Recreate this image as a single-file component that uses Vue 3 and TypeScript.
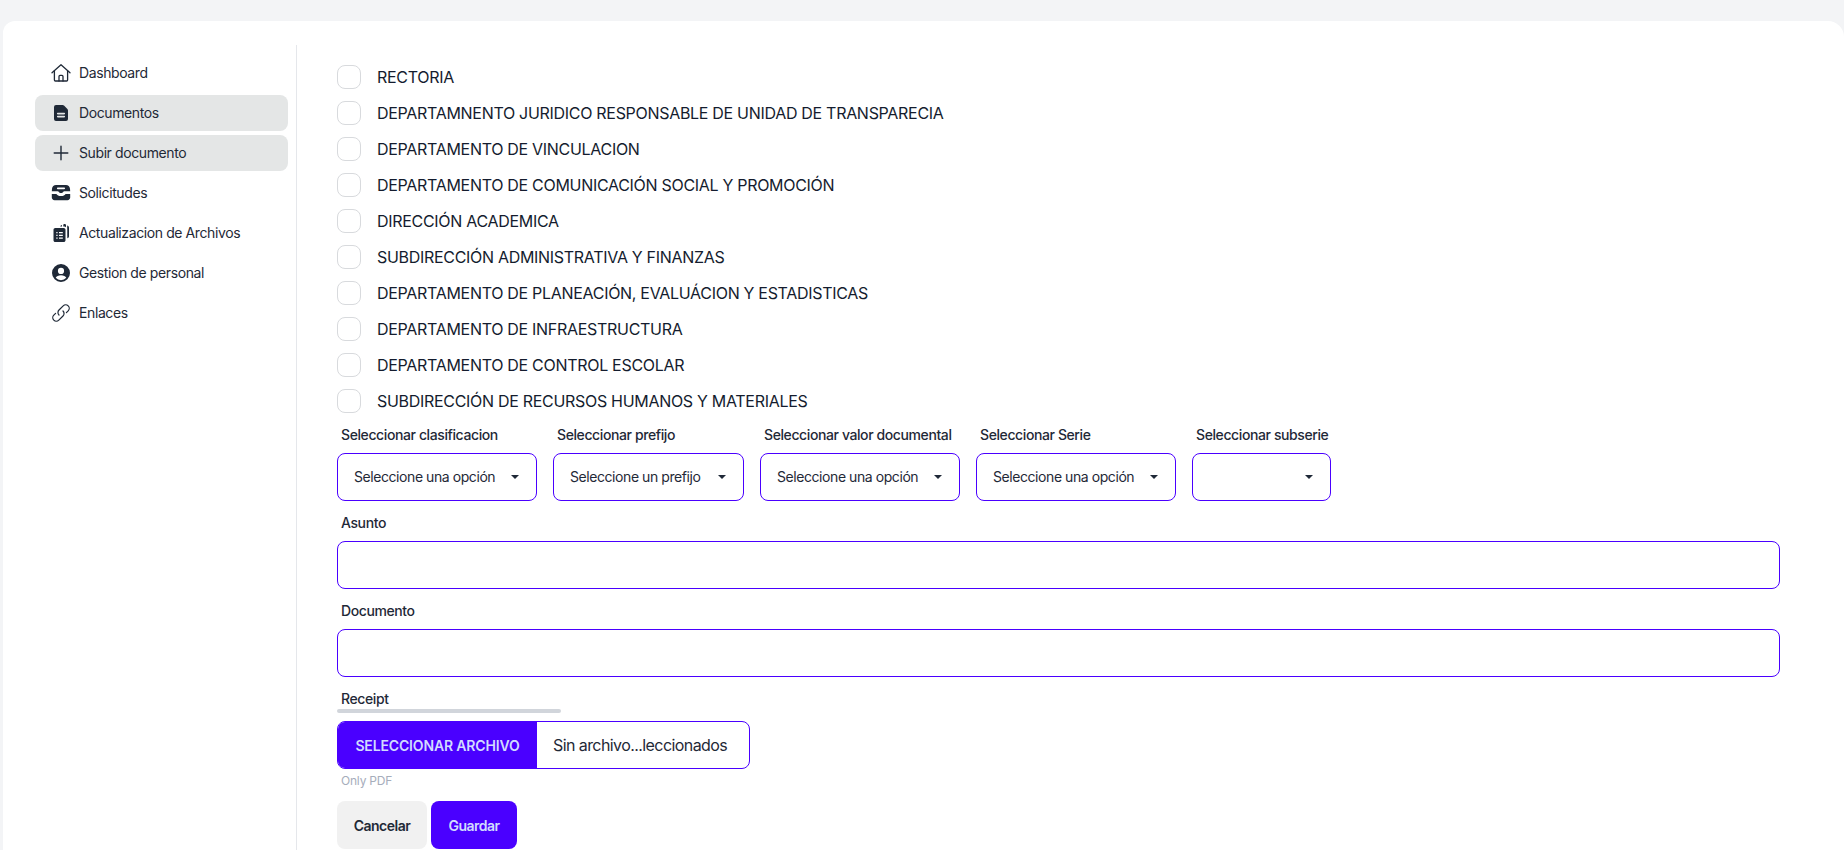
<script setup lang="ts">
import { ref } from 'vue';

interface NavItem {
  label: string;
  icon: string;
  active?: boolean;
}

const navItems: NavItem[] = [
  { label: 'Dashboard', icon: 'home' },
  { label: 'Documentos', icon: 'doc', active: true },
  { label: 'Subir documento', icon: 'plus', active: true },
  { label: 'Solicitudes', icon: 'trays' },
  { label: 'Actualizacion de Archivos', icon: 'files' },
  { label: 'Gestion de personal', icon: 'user' },
  { label: 'Enlaces', icon: 'link' },
];

const areas = [
  'RECTORIA',
  'DEPARTAMNENTO JURIDICO RESPONSABLE DE UNIDAD DE TRANSPARECIA',
  'DEPARTAMENTO DE VINCULACION',
  'DEPARTAMENTO DE COMUNICACIÓN SOCIAL Y PROMOCIÓN',
  'DIRECCIÓN ACADEMICA',
  'SUBDIRECCIÓN ADMINISTRATIVA Y FINANZAS',
  'DEPARTAMENTO DE PLANEACIÓN, EVALUÁCION Y ESTADISTICAS',
  'DEPARTAMENTO DE INFRAESTRUCTURA',
  'DEPARTAMENTO DE CONTROL ESCOLAR',
  'SUBDIRECCIÓN DE RECURSOS HUMANOS Y MATERIALES',
];

const selects = [
  { label: 'Seleccionar clasificacion', placeholder: 'Seleccione una opción' },
  { label: 'Seleccionar prefijo', placeholder: 'Seleccione un prefijo' },
  { label: 'Seleccionar valor documental', placeholder: 'Seleccione una opción' },
  { label: 'Seleccionar Serie', placeholder: 'Seleccione una opción' },
  { label: 'Seleccionar subserie', placeholder: '' },
];

const checked = ref<string[]>([]);
const asunto = ref('');
const documento = ref('');
</script>

<template>
  <div class="page">
    <div class="card">
      <aside class="sidebar">
        <ul class="menu">
          <li v-for="item in navItems" :key="item.label" class="menu-item" :class="{ active: item.active }">
            <svg v-if="item.icon === 'home'" class="icon" viewBox="0 0 20 20" fill="none" stroke="currentColor" stroke-width="1.3" stroke-linecap="round" stroke-linejoin="round">
              <path d="M1 9.800 10 1.800l9 8" />
              <path d="M3.400 8v9a1 1 0 0 0 1 1h11.200a1 1 0 0 0 1-1V8" />
              <path d="M8 18v-4.600a1 1 0 0 1 1-1h2a1 1 0 0 1 1 1V18" />
            </svg>
            <svg v-else-if="item.icon === 'doc'" class="icon" viewBox="0 0 20 20" fill="currentColor">
              <path fill-rule="evenodd" d="M5 2h6.600c.5 0 1 .2 1.400.6l3.400 3.400c.4.400.6.900.6 1.400V16a2 2 0 0 1-2 2H5a2 2 0 0 1-2-2V4a2 2 0 0 1 2-2Zm1.700 7.800a.8.8 0 0 0 0 1.600h6.600a.8.8 0 0 0 0-1.600Zm0 3a.8.8 0 0 0 0 1.600h6.600a.8.8 0 0 0 0-1.600Z" />
            </svg>
            <svg v-else-if="item.icon === 'plus'" class="icon" viewBox="0 0 20 20" fill="none" stroke="currentColor" stroke-width="1.4" stroke-linecap="round">
              <path d="M10 3.200v13.600M3.200 10h13.600" />
            </svg>
            <svg v-else-if="item.icon === 'trays'" class="icon" viewBox="0 0 20 20" fill="currentColor">
              <path fill-rule="evenodd" d="M5 2h10c2.200 0 3.800 1.600 4 3.800l.2 2.400h-6c-.4 0-.7.2-.9.600-.4.800-1.200 1.200-2.300 1.200s-1.900-.4-2.300-1.200c-.2-.4-.5-.6-.9-.6h-6L1 5.800C1.200 3.600 2.800 2 5 2Zm1.800 2.400c-.5 0-.9.4-.9.900s.4.900.9.900h6.400c.5 0 .9-.4.900-.9s-.4-.9-.9-.9Z" />
              <path d="M.8 11h4.600c.6 1.300 2.400 2.100 4.600 2.100s4-.8 4.600-2.100h4.600v3.600c0 1.500-1.200 2.600-2.700 2.600H3.500C2 17.200.8 16.100.8 14.600Z" />
            </svg>
            <svg v-else-if="item.icon === 'files'" class="icon" viewBox="0 0 20 20" fill="currentColor">
              <path d="M9.200 3.400c.2-.8.9-1.400 1.800-1.500v1.500Z" />
              <path d="M12.300 3.400V2c0-.6.600-1 1.300-1 .7 0 1.400.4 1.400 1.200v2c-.4-.5-1-.8-1.700-.8Z" />
              <path d="M16.200 2.400c1 .3 1.800 1.100 1.800 2.200v8.600c0 1-.6 1.800-1.700 2Z" />
              <path fill-rule="evenodd" d="M4.300 5h8.400c1 0 1.800.8 1.800 1.800v10.400c0 1-.8 1.800-1.800 1.800H4.300c-1 0-1.800-.8-1.800-1.800V6.800C2.500 5.800 3.300 5 4.300 5Zm1 4v1.300h1.300V9Zm2.700 0v1.300h3.800V9Zm-2.700 2.700V13h1.300v-1.300Zm2.700 0V13h3.800v-1.300Zm-2.700 2.700v1.300h1.300v-1.300Zm2.700 0v1.300h3.800v-1.300Z" />
            </svg>
            <svg v-else-if="item.icon === 'user'" class="icon" viewBox="0 0 20 20" fill="currentColor">
              <path fill-rule="evenodd" d="M10 1a9 9 0 1 1 0 18 9 9 0 0 1 0-18Zm0 3.800a3.100 3.100 0 1 0 0 6.200 3.100 3.100 0 0 0 0-6.200Zm0 7.500c-2.500 0-4.600 1-5.300 2.400a7 7 0 0 0 10.600 0c-.7-1.400-2.800-2.400-5.300-2.400Z" />
            </svg>
            <svg v-else class="icon" viewBox="0 0 20 20" fill="none" stroke="currentColor" stroke-width="1.2" stroke-linecap="round" stroke-linejoin="round">
              <path d="M12 8a3.500 3.500 0 0 1 0 5l-4.200 4.200a3.500 3.500 0 0 1-5-5l1.800-1.800" />
              <path d="M8 12a3.500 3.500 0 0 1 0-5l4.200-4.200a3.500 3.500 0 0 1 5 5l-1.800 1.800" />
            </svg>
            <span class="menu-text">{{ item.label }}</span>
          </li>
        </ul>
      </aside>

      <main class="content">
        <div class="areas">
          <label v-for="area in areas" :key="area" class="area">
            <input v-model="checked" class="checkbox" type="checkbox" :value="area" />
            <span>{{ area }}</span>
          </label>
        </div>

        <div class="selects">
          <div v-for="s in selects" :key="s.label" class="field">
            <span class="label">{{ s.label }}</span>
            <div class="select">{{ s.placeholder }}</div>
          </div>
        </div>

        <div class="field wide">
          <span class="label">Asunto</span>
          <input v-model="asunto" class="input" type="text" />
        </div>
        <div class="field wide">
          <span class="label">Documento</span>
          <input v-model="documento" class="input" type="text" />
        </div>

        <div class="receipt">
          <span class="label">Receipt</span>
          <div class="bar"></div>
          <div class="file">
            <button type="button" class="file-btn">SELECCIONAR ARCHIVO</button>
            <span class="file-name">Sin archivo...leccionados</span>
          </div>
          <span class="hint">Only PDF</span>
        </div>

        <div class="actions">
          <button type="button" class="btn cancel">Cancelar</button>
          <button type="button" class="btn primary">Guardar</button>
        </div>
      </main>
    </div>
  </div>
</template>

<style>
html, body {
  margin: 0;
  height: 850px;
  overflow: hidden;
  background: #f3f4f6;
}
</style>

<style scoped>
.page {
  padding: 21px 0 0 3px;
  font-family: Inter, "Liberation Sans", sans-serif;
  color: #1f2937;
}
.card {
  display: flex;
  height: 829px;
  background: #fff;
  border-radius: 12px 16px 0 0;
  padding: 24px 0 0 32px;
  box-sizing: border-box;
}

.sidebar {
  width: 262px;
  flex: none;
  border-right: 1px solid #e5e7eb;
  box-sizing: border-box;
  padding-right: 8px;
}
.menu {
  list-style: none;
  margin: 10px 0 0;
  padding: 0;
  display: flex;
  flex-direction: column;
  gap: 4px;
}
.menu-item {
  display: flex;
  align-items: center;
  gap: 8px;
  height: 36px;
  padding: 0 16px;
  border-radius: 8px;
  font-size: 14px;
  letter-spacing: -0.4px;
}
.menu-item.active {
  background: #e4e6e6;
}
.menu-text {
  padding-bottom: 2px;
}
.icon {
  width: 20px;
  height: 20px;
  flex: none;
}

.content {
  flex: 1;
  padding: 20px 64px 0 40px;
}
.areas {
  display: flex;
  flex-direction: column;
  gap: 12px;
}
.area {
  display: flex;
  align-items: center;
  gap: 16px;
  height: 24px;
  font-size: 16px;
  letter-spacing: -0.3px;
  color: #141c2e;
}
.checkbox {
  appearance: none;
  width: 24px;
  height: 24px;
  margin: 0;
  border: 1px solid #d8dadd;
  border-radius: 8px;
  background: #fff;
  box-sizing: border-box;
}

.selects {
  display: grid;
  grid-template-columns: 200px 191px 200px 200px 139px;
  gap: 16px;
  margin-top: 4px;
}
.field {
  display: flex;
  flex-direction: column;
  min-width: 0;
}
.wide {
  margin-top: 4px;
}
.label {
  display: block;
  padding: 8px 4px;
  font-size: 14px;
  line-height: 20px;
  font-weight: 500;
  letter-spacing: -0.4px;
  white-space: nowrap;
}
.select {
  position: relative;
  height: 48px;
  box-sizing: border-box;
  border: 1px solid #4a00ff;
  border-radius: 8px;
  padding-left: 16px;
  font-size: 14px;
  line-height: 46px;
  letter-spacing: -0.43px;
}
.select::after {
  content: '';
  position: absolute;
  right: 17px;
  top: 21px;
  border: 4px solid transparent;
  border-top-color: #1f2937;
  border-bottom: 0;
}
.input {
  height: 48px;
  box-sizing: border-box;
  border: 1px solid #4a00ff;
  border-radius: 8px;
  background: #fff;
  outline: none;
  padding: 0 16px;
}

.receipt {
  margin-top: 4px;
  display: flex;
  flex-direction: column;
}
.receipt .label {
  padding-bottom: 0;
}
.bar {
  width: 224px;
  height: 4px;
  margin-bottom: 8px;
  border-radius: 2px;
  background: #d1d5db;
}
.file {
  display: flex;
  align-items: center;
  width: 413px;
  height: 48px;
  box-sizing: border-box;
  border: 1px solid #4a00ff;
  border-radius: 8px;
  overflow: hidden;
}
.file-btn {
  width: 199px;
  height: 48px;
  flex: none;
  border: 0;
  background: #4a00ff;
  color: #d1dbff;
  font: 600 14px Inter, "Liberation Sans", sans-serif;
  letter-spacing: -0.15px;
}
.file-name {
  padding-left: 16px;
  font-size: 16px;
  letter-spacing: -0.58px;
}
.hint {
  padding: 4px 4px 0;
  font-size: 12px;
  line-height: 16px;
  letter-spacing: -0.2px;
  color: #a6adbb;
}
.actions {
  display: flex;
  gap: 4px;
  margin-top: 12px;
}
.btn {
  height: 48px;
  width: 90px;
  padding: 0;
  border: 0;
  border-radius: 8px;
  background: #f1f1f1;
  color: #1f2937;
  font: 600 14px Inter, "Liberation Sans", sans-serif;
  letter-spacing: -0.5px;
}
.btn.primary {
  width: 86px;
  background: #4a00ff;
  color: #d1dbff;
}
</style>
